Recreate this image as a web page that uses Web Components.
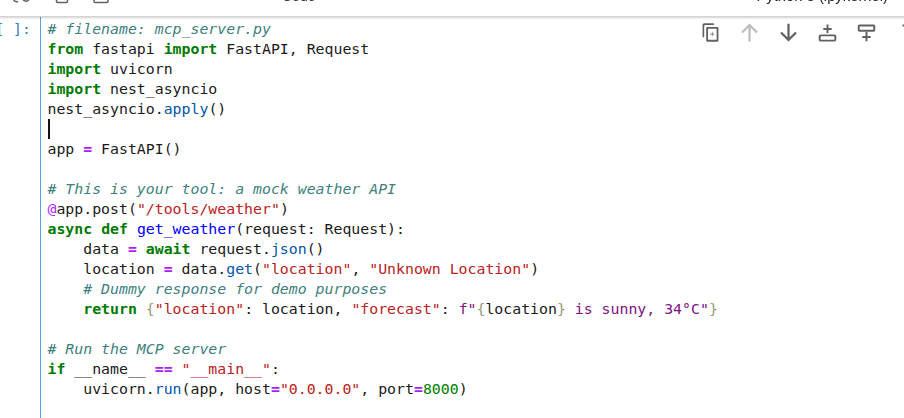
<!DOCTYPE html>
<html>
<head>
<meta charset="utf-8">
<title>mcp_server.py</title>
<style>
  html, body { margin: 0; height: 100%; background: #fff; overflow: hidden; }
</style>
</head>
<body>
<nb-app>
  <nb-toolbar slot="toolbar"></nb-toolbar>
  <nb-cell>
    <span slot="prompt">[ ]:</span>
    <nb-editor></nb-editor>
    <nb-cell-actions slot="actions"></nb-cell-actions>
  </nb-cell>
</nb-app>

<template id="tpl-editor"><style>
    :host { display: block; }
    pre {
      margin: 0;
      font: 14.85px/20px "DejaVu Sans Mono", monospace;
      color: #1a1a1a;
      white-space: pre;
    }
    .cursor { position: absolute; width: 2px; height: 20px; background: #111; }
    .k { color: #007a00; font-weight: bold; }
    .c { color: #408080; font-style: italic; }
    .s { color: #ba2121; }
    .f { color: #80107f; }
    .o { color: #aa22ff; font-weight: bold; }
    .n { color: #008000; }
    .m { color: #aa22ff; }
    .p { color: #0055aa; }
    .d { color: #0000ff; }
    .b { color: #999977; }
</style><pre><span class="c"># filename: mcp_server.py</span>
<span class="k">from</span> fastapi <span class="k">import</span> FastAPI, Request
<span class="k">import</span> uvicorn
<span class="k">import</span> nest_asyncio
nest_asyncio.<span class="p">apply</span>()
<span class="cursor"></span>
app <span class="o">=</span> FastAPI()

<span class="c"># This is your tool: a mock weather API</span>
<span class="m">@</span>app.post(<span class="s">"/tools/weather"</span>)
<span class="k">async</span> <span class="k">def</span> <span class="d">get_weather</span>(request: Request):
    data <span class="o">=</span> <span class="k">await</span> request.<span class="p">json</span>()
    location <span class="o">=</span> data.<span class="p">get</span>(<span class="s">"location"</span>, <span class="s">"Unknown Location"</span>)
    <span class="c"># Dummy response for demo purposes</span>
    <span class="k">return</span> <span class="b">{</span><span class="s">"location"</span>: location, <span class="s">"forecast"</span>: <span class="f">f"</span><span class="b">{</span>location<span class="b">}</span><span class="f"> is sunny, 34°C"</span><span class="b">}</span>

<span class="c"># Run the MCP server</span>
<span class="k">if</span> __name__ <span class="o">==</span> <span class="s">"__main__"</span>:
    uvicorn.<span class="p">run</span>(app, host<span class="o">=</span><span class="s">"0.0.0.0"</span>, port<span class="o">=</span><span class="n">8000</span>)</pre></template>

<template id="tpl-toolbar"><style>
    :host {
      display: block;
      height: 16px;
      overflow: hidden;
      background: #fff;
      color: #616161;
    }
    .row {
      display: flex;
      align-items: center;
      height: 20px;
      margin-top: -14px;
      font: 14px/20px "Liberation Sans", sans-serif;
    }
    svg { display: block; flex: none; fill: none; stroke: #616161; stroke-width: 1.5; }
    .type { margin-left: 60px; color: #333; }
    .spring { flex: 1; }
    .status { width: 11px; height: 11px; border-radius: 50%; background: #616161; margin-top: -3px; }
    .kernel { margin-left: 24px; font-size: 14.8px; color: #222; white-space: nowrap; }
    .cut { margin-left: 12px; }
    .copy { margin-left: 24px; }
    .paste { margin-left: 24px; }
    .tick { margin-left: 26px; width: 1px; height: 3px; margin-top: 0; background: #bbb; }
    .run { margin-left: 76px; width: 10px; height: 10px; background: #757575; border-radius: 50%; margin-top: -6px; }
</style><div class="row">
    <svg class="cut" width="19" height="16" viewBox="0 0 19 16"><path d="M1 10c.5 3 3 4.300 5 3.500M18 10c-2 3.500-4 4-7 2"/></svg>
    <svg class="copy" width="14" height="16" viewBox="0 0 14 16"><path d="M1.500 8v5.500q0 1 1 1h9q1 0 1-1V8"/></svg>
    <svg class="paste" width="16" height="16" viewBox="0 0 16 16"><path d="M1 8v5.500q0 1 1 1h12q1 0 1-1V8"/></svg>
    <span class="tick"></span>
    <span class="run"></span>
    <span class="type">Code</span>
    <span class="spring"></span>
    <span class="status"></span>
    <span class="kernel">Python 3 (ipykernel)</span>
    <svg width="8" height="16" viewBox="0 0 8 16" style="margin-left:7px;margin-right:1px"><path d="M3 3q-1.500 3 0 5.500"/></svg>
</div></template>

<template id="tpl-actions"><style>
    :host {
      position: absolute;
      top: 5px;
      left: 699.500px;
      display: flex;
      gap: 18px;
    }
    svg { display: block; flex: none; width: 21px; height: 21px; fill: none; stroke: #616161; stroke-width: 1.3; }
    .solid { fill: #616161; stroke: none; fill-rule: evenodd; }
    .off { stroke: #bdbdbd; }
</style>
    <svg viewBox="0 0 14 14"><path class="solid" d="M2.800.875h6.096c.305 0 .554.264.554.587s-.249.587-.554.587H3.354c-.305 0-.554.264-.554.587v7.044c0 .323-.249.587-.554.587s-.554-.264-.554-.587V2.049c0-.646.499-1.174 1.108-1.174zM5.367 11.900V4.550h5.716v7.350H5.367zM4.142 4.142c0-.451.365-.817.816-.817h6.534c.451 0 .816.366.816.817v8.166c0 .451-.365.817-.816.817H4.958c-.451 0-.816-.366-.816-.817V4.142z"/><path class="solid" d="M9.436 8.265H8.364v1.072c0 .118-.096.214-.214.214s-.214-.096-.214-.214V8.265H6.864c-.118 0-.214-.096-.214-.214s.096-.215.214-.215h1.072V6.765c0-.118.096-.214.214-.214s.214.096.214.214v1.071h1.072c.118 0 .214.097.214.215s-.096.214-.214.214z"/></svg>
    <svg viewBox="0 0 14 14" class="off" style="stroke-width:1.5"><path d="M7 13V2.300M2 7l5-5 5 5"/></svg>
    <svg viewBox="0 0 14 14" style="stroke-width:1.5"><path d="M7 1.200v10.500M2 7l5 5 5-5"/></svg>
    <svg viewBox="0 0 14 14"><rect x="1.800" y="8.900" width="10.400" height="3.500" rx=".5"/><path d="M7 1.700V7.300M4.200 4.600h5.600"/></svg>
    <svg viewBox="0 0 14 14"><rect x="1.800" y="2.300" width="10.400" height="3.500" rx=".5"/><path d="M7 6.500v6.300M4.200 10h5.600"/></svg>
    <svg viewBox="0 0 14 14"><path d="M5 2.300h5"/></svg>
</template>

<script>
const _attachTemplate = function (host, id) {
  const root = host.attachShadow({mode: 'open'})
  root.appendChild(document.getElementById(id).content.cloneNode(true))
  return root
}

class NbApp extends HTMLElement {
  constructor () {
    super()
    const root = this.attachShadow({mode: 'open'})
    root.innerHTML = `<style>
      :host { display: flex; flex-direction: column; width: 904px; height: 418px; overflow: hidden; filter: blur(.3px); }
      .top { position: relative; z-index: 1; flex: none; border-bottom: 1px solid #d4d4d4; box-shadow: 0 1px 2px rgba(0,0,0,.18); }
      .main { flex: 1; display: flex; min-height: 0; }
    </style>
    <div class="top"><slot name="toolbar"></slot></div>
    <div class="main"><slot></slot></div>`
  }
}

class NbToolbar extends HTMLElement {
  constructor () {
    super()
    _attachTemplate(this, 'tpl-toolbar')
  }
}

class NbCell extends HTMLElement {
  constructor () {
    super()
    const root = this.attachShadow({mode: 'open'})
    root.innerHTML = `<style>
      :host { display: flex; position: relative; flex: 1; min-width: 0; background: #fff; overflow: hidden; }
      .prompt {
        flex: none;
        width: 31px;
        margin-right: 8.500px;
        padding-top: 2px;
        text-align: right;
        white-space: nowrap;
        direction: rtl;
        font: 14.85px/20px "DejaVu Sans Mono", monospace;
        color: #307fc1;
      }
      .prompt span { direction: ltr; unicode-bidi: bidi-override; }
      .body {
        flex: 1;
        min-width: 0;
        border-left: 1.500px solid #5a9fdc;
        padding: 2px 0 0 7px;
      }
    </style>
    <div class="prompt"><span><slot name="prompt"></slot></span></div>
    <div class="body"><slot></slot></div>
    <slot name="actions"></slot>`
  }
}

class NbEditor extends HTMLElement {
  constructor () {
    super()
    _attachTemplate(this, 'tpl-editor')
  }
}

class NbCellActions extends HTMLElement {
  constructor () {
    super()
    _attachTemplate(this, 'tpl-actions')
  }
}

customElements.define('nb-app', NbApp)
customElements.define('nb-toolbar', NbToolbar)
customElements.define('nb-cell', NbCell)
customElements.define('nb-editor', NbEditor)
customElements.define('nb-cell-actions', NbCellActions)
</script>
</body>
</html>
